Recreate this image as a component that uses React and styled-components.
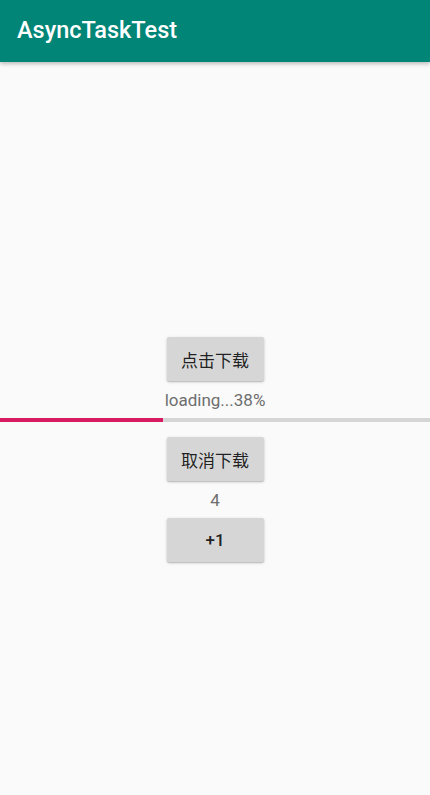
import React from "react";
import styled, { createGlobalStyle } from "styled-components";

const Global = createGlobalStyle`
  html, body { margin: 0; padding: 0; background: #fafafa; }
  body { font-family: Roboto, "Noto Sans CJK SC", sans-serif; }
`;

const Screen = styled.div`
  width: 430px;
  height: 795px;
  display: flex;
  flex-direction: column;
  background: #fafafa;
  overflow: hidden;
`;

const AppBar = styled.header`
  height: 62px;
  flex: none;
  background: #008577;
  display: flex;
  align-items: center;
  padding-left: 17px;
  box-shadow: 0 2px 4px rgba(0, 0, 0, 0.25);
  position: relative;
  z-index: 1;
`;

const Title = styled.h1`
  margin: 0;
  margin-top: -2px;
  font-family: Roboto, sans-serif;
  font-weight: 500;
  font-size: 23.5px;
  color: #ffffff;
`;

const Main = styled.main`
  flex: 1;
  display: flex;
  flex-direction: column;
  align-items: center;
  padding-top: 275px;
`;

const Button = styled.button`
  width: 97px;
  height: 44px;
  margin-top: ${(p) => p.$mt || 0}px;
  border: none;
  border-radius: 2px;
  background: #d6d6d6;
  box-shadow: 0 1px 3px rgba(0, 0, 0, 0.22), 0 1px 1px rgba(0, 0, 0, 0.1);
  font-family: Roboto, "Noto Sans CJK SC", sans-serif;
  font-size: 17px;
  font-weight: ${(p) => (p.$bold ? 500 : 400)};
  color: rgba(0, 0, 0, 0.87);
  padding: 0;
  display: flex;
  align-items: center;
  justify-content: center;
`;

const Label = styled.div`
  margin-top: ${(p) => p.$mt || 0}px;
  height: 20px;
  line-height: 20px;
  font-family: Roboto, sans-serif;
  font-size: 17px;
  color: #6e6e6e;
`;

const Track = styled.div`
  align-self: stretch;
  height: 4px;
  margin-top: 8px;
  background: #d5d5d5;
`;

const Fill = styled.div`
  height: 100%;
  background: #d81b60;
`;

export default function App() {
  const progress = 38;
  return (
    <>
      <Global />
      <Screen>
        <AppBar>
          <Title>AsyncTaskTest</Title>
        </AppBar>
        <Main>
          <Button>点击下载</Button>
          <Label $mt={9}>loading...{progress}%</Label>
          <Track>
            <Fill style={{ width: `${progress}%` }} />
          </Track>
          <Button $mt={15}>取消下载</Button>
          <Label $mt={9}>4</Label>
          <Button $mt={8} $bold>+1</Button>
        </Main>
      </Screen>
    </>
  );
}
